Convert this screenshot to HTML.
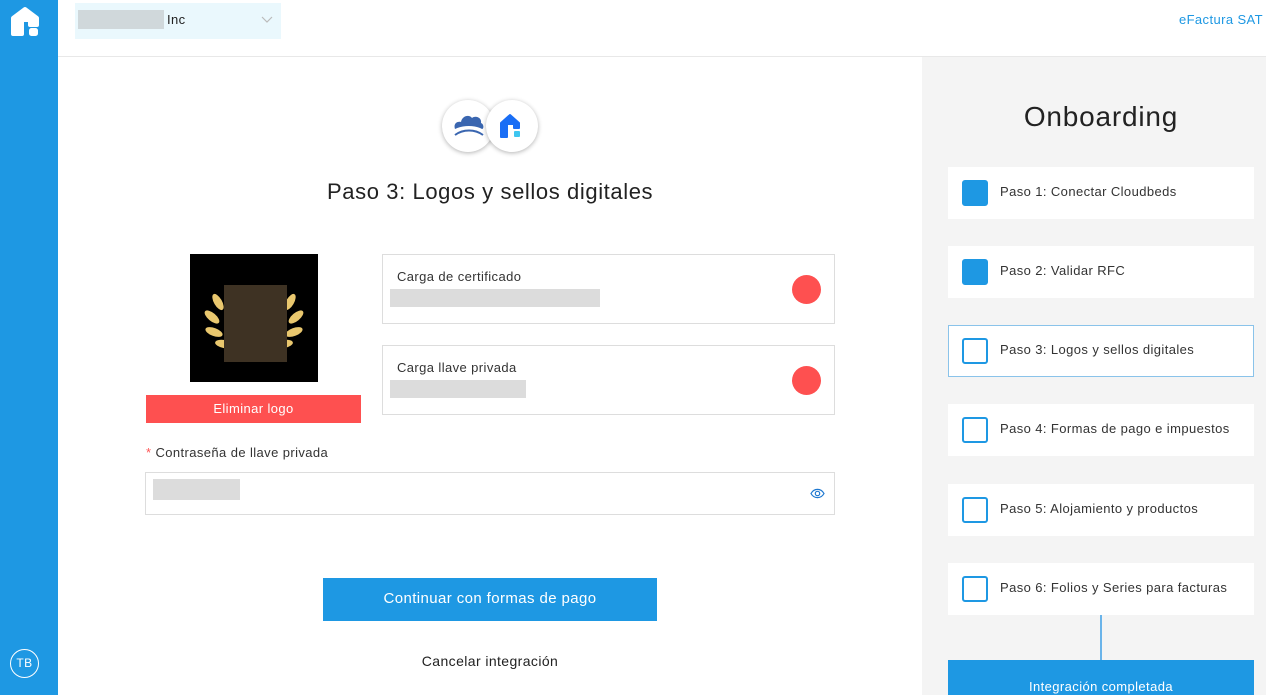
<!DOCTYPE html>
<html><head><meta charset="utf-8"><style>
*{box-sizing:border-box;margin:0;padding:0}
html,body{width:1266px;height:695px;overflow:hidden}
body{background:#fff;font-family:"Liberation Sans","DejaVu Sans",sans-serif;color:#222;position:relative;letter-spacing:.4px}
.abs{position:absolute}
.side{left:0;top:0;width:58px;height:695px;background:#1e98e3}
.top{left:58px;top:0;width:1208px;height:57px;border-bottom:1px solid #e8e8e8}
.right{left:922px;top:57px;width:344px;height:638px;background:#f4f4f4}
.card{position:absolute;left:948px;width:306px;height:52px;background:#fff;font-size:13px;color:#333}
.card .cb{position:absolute;left:14px;top:13px;width:26px;height:26px;border-radius:3px;border:2px solid #1e98e3;background:#fff}
.card .cb.f{background:#1e98e3}
.card span{position:absolute;left:52px;top:17px}
.box{position:absolute;left:382px;width:453px;height:70px;border:1px solid #ddd;background:#fff}
.box .l{position:absolute;left:14px;top:14px;font-size:13px;color:#333}
.box .g{position:absolute;left:7px;top:34px;height:18px;background:#dcdcdc}
.box .r{position:absolute;right:13px;top:20px;width:29px;height:29px;border-radius:50%;background:#fe5050}
</style></head><body>
<div class="abs side">
 <svg class="abs" style="left:10px;top:5px" width="30" height="32" viewBox="0 0 30 32"><path d="M3 13 L15 4 L27 13 L27 20 L20 20 L20 15 L12 15 L12 29 L3 29 Z" fill="#fff" stroke="#fff" stroke-width="4" stroke-linejoin="round"/><rect x="19" y="23" width="9" height="8" rx="2.5" fill="#fff"/></svg>
 <div class="abs" style="left:10px;top:649px;width:29px;height:29px;border:1.5px solid #fff;border-radius:50%;color:#fff;font-size:12px;text-align:center;line-height:26px">TB</div>
</div>
<div class="abs top">
 <div class="abs" style="left:17px;top:3px;width:206px;height:36px;background:#eaf8fd"></div>
 <div class="abs" style="left:20px;top:10px;width:86px;height:19px;background:#d0d8db"></div>
 <div class="abs" style="left:109px;top:12px;font-size:13px">Inc</div>
 <svg class="abs" style="left:203px;top:16px" width="12" height="8"><path d="M1 1 L6 6 L11 1" fill="none" stroke="#bbb" stroke-width="1.2"/></svg>
 <div class="abs" style="right:3px;top:12px;font-size:13px;color:#1e98e3">eFactura SAT</div>
</div>
<div class="abs" style="left:442px;top:100px;width:52px;height:52px;border-radius:50%;background:#fff;box-shadow:0 1px 5px rgba(0,0,0,.3)">
 <svg class="abs" style="left:11px;top:13px" width="32" height="26" viewBox="0 0 32 26"><path d="M2 16 C0 10 5 8 8 9 C9 3 16 1 19 5 C23 2 29 5 28 10 C31 11 31 16 29 16 C22 12 10 12 2 16Z" fill="#3a66b0"/><path d="M2 22 C10 16 22 16 30 22" fill="none" stroke="#3a66b0" stroke-width="2"/></svg>
</div>
<div class="abs" style="left:486px;top:100px;width:52px;height:52px;border-radius:50%;background:#fff;box-shadow:0 1px 5px rgba(0,0,0,.3)">
 <svg class="abs" style="left:14px;top:13px" width="24" height="26" viewBox="0 0 24 26"><path d="M1 10 L10 2 L19 10 L19 15 L14 15 L14 11 L7 11 L7 24 L1 24 Z" fill="#1a6ef5" stroke="#1a6ef5" stroke-width="2" stroke-linejoin="round"/><rect x="14" y="18" width="6" height="6" rx="1" fill="#3ec6f0"/></svg>
</div>
<div class="abs" style="left:327px;top:179px;font-size:22px;color:#222;letter-spacing:.6px">Paso 3: Logos y sellos digitales</div>
<div class="abs" style="left:190px;top:254px;width:128px;height:128px;background:#000">
 <svg class="abs" style="left:10px;top:18px" width="108" height="90" viewBox="0 0 108 90"><g fill="#e9c76e"><ellipse cx="18" cy="30" rx="4" ry="9" transform="rotate(-30 18 30)"/><ellipse cx="12" cy="45" rx="4" ry="9" transform="rotate(-50 12 45)"/><ellipse cx="14" cy="60" rx="4" ry="9" transform="rotate(-70 14 60)"/><ellipse cx="24" cy="72" rx="4" ry="9" transform="rotate(-80 24 72)"/><ellipse cx="90" cy="30" rx="4" ry="9" transform="rotate(30 90 30)"/><ellipse cx="96" cy="45" rx="4" ry="9" transform="rotate(50 96 45)"/><ellipse cx="94" cy="60" rx="4" ry="9" transform="rotate(70 94 60)"/><ellipse cx="84" cy="72" rx="4" ry="9" transform="rotate(80 84 72)"/></g></svg>
 <div class="abs" style="left:34px;top:31px;width:63px;height:77px;background:#3e3223"></div>
</div>
<div class="abs" style="left:146px;top:395px;width:215px;height:28px;background:#fe5050;color:#fff;font-size:13px;text-align:center;line-height:28px">Eliminar logo</div>
<div class="box" style="top:254px"><div class="l">Carga de certificado</div><div class="g" style="width:210px"></div><div class="r"></div></div>
<div class="box" style="top:345px"><div class="l">Carga llave privada</div><div class="g" style="width:136px"></div><div class="r"></div></div>
<div class="abs" style="left:146px;top:445px;font-size:13px;color:#333"><span style="color:#f55">*</span> Contraseña de llave privada</div>
<div class="abs" style="left:145px;top:472px;width:690px;height:43px;border:1px solid #ddd">
 <div class="abs" style="left:7px;top:6px;width:87px;height:21px;background:#dcdcdc"></div>
 <svg class="abs" style="left:664px;top:15px" width="15" height="11" viewBox="0 0 15 11"><path d="M1 5.5 C4 0 11 0 14 5.5 C11 11 4 11 1 5.5Z" fill="none" stroke="#1e78d0" stroke-width="1.2"/><circle cx="7.5" cy="5.5" r="2.2" fill="none" stroke="#1e78d0" stroke-width="1.2"/></svg>
</div>
<div class="abs" style="left:323px;top:578px;width:334px;height:43px;background:#1e98e3;color:#fff;font-size:15px;text-align:center;line-height:42px">Continuar con formas de pago</div>
<div class="abs" style="left:323px;top:653px;width:334px;text-align:center;font-size:14px;color:#222">Cancelar integración</div>
<div class="abs right"></div>
<div class="abs" style="left:922px;top:101px;width:358px;text-align:center;font-size:28px;color:#222;letter-spacing:.8px">Onboarding</div>
<div class="card" style="top:167px"><div class="cb f"></div><span>Paso 1: Conectar Cloudbeds</span></div>
<div class="card" style="top:246px"><div class="cb f"></div><span>Paso 2: Validar RFC</span></div>
<div class="card" style="top:325px;border:1px solid #8ac3ea"><div class="cb" style="left:13px;top:12px"></div><span style="left:51px;top:16px">Paso 3: Logos y sellos digitales</span></div>
<div class="card" style="top:404px"><div class="cb"></div><span>Paso 4: Formas de pago e impuestos</span></div>
<div class="card" style="top:484px"><div class="cb"></div><span>Paso 5: Alojamiento y productos</span></div>
<div class="card" style="top:563px"><div class="cb"></div><span>Paso 6: Folios y Series para facturas</span></div>
<div class="abs" style="left:1100px;top:615px;width:2px;height:45px;background:#6ab4ea"></div>
<div class="abs" style="left:948px;top:660px;width:306px;height:35px;background:#1e98e3;color:#fff;font-size:13px;text-align:center;padding-top:19px">Integración completada</div>
</body></html>
